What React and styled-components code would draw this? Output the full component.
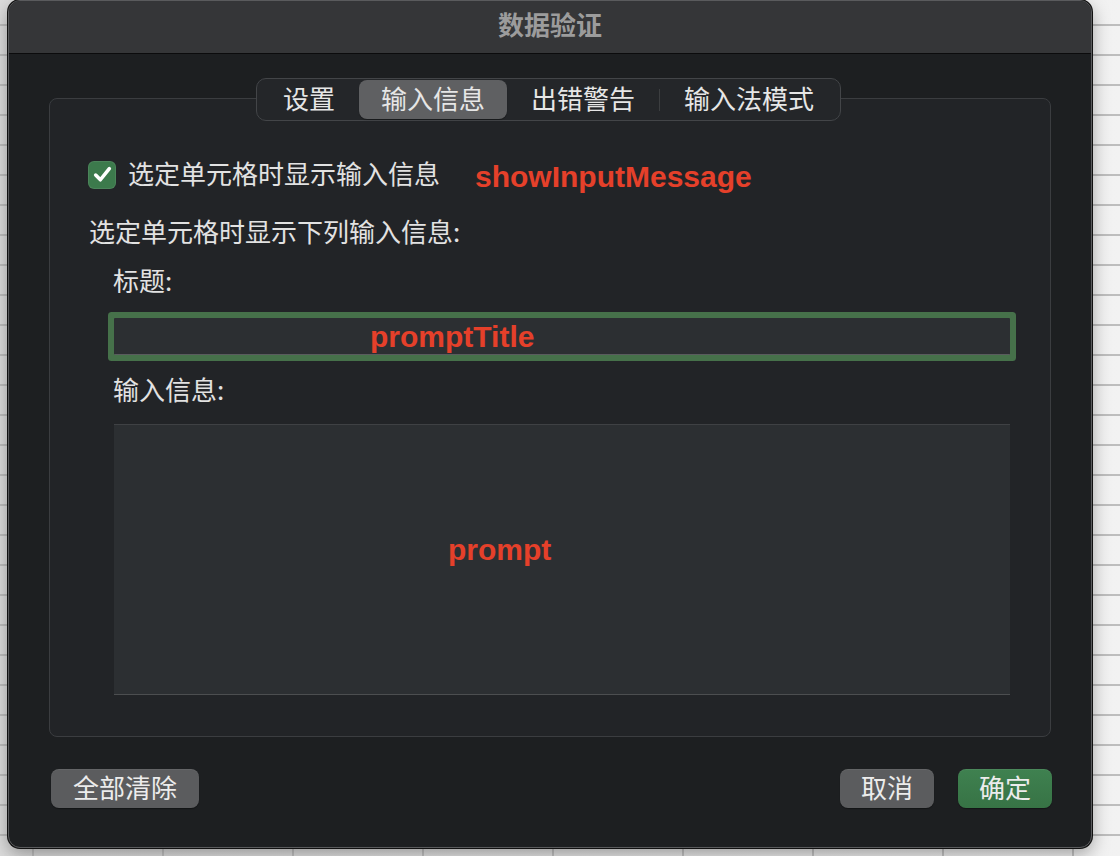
import React, { useState } from 'react';
import styled, { createGlobalStyle } from 'styled-components';

const GlobalStyle = createGlobalStyle`
  html, body {
    margin: 0;
    padding: 0;
  }
  body {
    width: 1120px;
    height: 856px;
    overflow: hidden;
    font-family: "Noto Sans CJK SC", "Noto Sans", sans-serif;
    background-color: #e9e9e9;
    background-image:
      repeating-linear-gradient(to bottom, transparent 0, transparent 24px, #bdbdbd 24px, #bdbdbd 26px, transparent 26px, transparent 30px),
      repeating-linear-gradient(to right, transparent 0, transparent 32px, #c4c4c4 32px, #c4c4c4 34px, transparent 34px, transparent 130px),
      linear-gradient(to right, #dcdcdc, #f2f2f2);
  }
`;

const CJK = '"Noto Sans CJK SC", "Noto Sans", sans-serif';
const LATIN = '"Liberation Sans", Arial, sans-serif';

const s = {
  Page: styled.div`
    padding-left: 8px;
    height: 856px;
  `,
  Dialog: styled.div`
    width: 1084px;
    height: 848px;
    box-sizing: border-box;
    display: flex;
    flex-direction: column;
    background: #1d1f21;
    border: 1px solid #5a5b5d;
    border-radius: 12px;
    overflow: hidden;
    box-shadow: 0 0 0 1px #111, 0 6px 18px rgba(0, 0, 0, 0.35);
  `,
  TitleBar: styled.div`
    height: 53px;
    box-sizing: border-box;
    padding-bottom: 6px;
    flex-shrink: 0;
    display: flex;
    align-items: center;
    justify-content: center;
    background: #353638;
    border-bottom: 1px solid #0b0b0c;
    color: #9c9c9c;
    font-family: ${CJK};
    font-weight: 700;
    font-size: 26px;
    line-height: 1;
  `,
  Body: styled.div`
    flex: 1;
    display: flex;
    flex-direction: column;
    padding: 24px 39px 0 40px;
  `,
  TabRow: styled.div`
    display: flex;
    justify-content: center;
    position: relative;
    z-index: 1;
    margin-bottom: -23px;
    padding-right: 4px;
  `,
  Tabs: styled.div`
    display: flex;
    align-items: center;
    height: 43px;
    box-sizing: border-box;
    padding: 0 2px;
    background: #242629;
    border: 1px solid #434548;
    border-radius: 10px;
  `,
  Tab: styled.div`
    height: 39px;
    box-sizing: border-box;
    display: flex;
    align-items: center;
    padding: 0 ${(p) => p.$pad}px 4px;
    border-radius: 8px;
    background: ${(p) => (p.$active ? '#5f6062' : 'transparent')};
    box-shadow: ${(p) => (p.$active ? '0 1px 1px rgba(0,0,0,0.35)' : 'none')};
    color: #e6e6e6;
    font-family: ${CJK};
    font-size: 26px;
    line-height: 1;
    cursor: default;
  `,
  TabDivider: styled.div`
    width: 1px;
    height: 22px;
    background: #3c3e40;
  `,
  Panel: styled.div`
    width: 1002px;
    height: 639px;
    box-sizing: border-box;
    padding: 58px 0 0 38px;
    display: flex;
    flex-direction: column;
    background: #222427;
    border: 1px solid #3b3d40;
    border-radius: 8px;
  `,
  CheckRow: styled.label`
    display: flex;
    align-items: center;
    height: 36px;
  `,
  Check: styled.span`
    width: 28px;
    height: 28px;
    border-radius: 6px;
    background: #3c7a4c;
    display: flex;
    align-items: center;
    justify-content: center;
    margin-right: 12px;
    margin-top: -1px;
    box-shadow: inset 0 0 0 1px rgba(255, 255, 255, 0.08);
  `,
  Label: styled.div`
    color: #e2e2e2;
    font-family: ${CJK};
    font-size: 26px;
    line-height: 32px;
    height: 36px;
    margin-top: ${(p) => p.$top || 0}px;
    margin-left: ${(p) => p.$indent || 0}px;
  `,
  Note: styled.span`
    color: #e5402a;
    font-family: ${LATIN};
    font-weight: 700;
    font-size: 30px;
    line-height: 1;
    margin-left: ${(p) => p.$left || 0}px;
    margin-top: ${(p) => p.$top || 0}px;
  `,
  TitleField: styled.div`
    width: 896px;
    height: 37px;
    box-sizing: border-box;
    margin: 18px 0 0 26px;
    display: flex;
    align-items: center;
    padding-left: 256px;
    padding-top: 2px;
    background: #2c2f32;
    border-bottom: 1px solid #5a5c5e;
    box-shadow: 0 0 0 6px #46714a;
    border-radius: 1px;
  `,
  MessageField: styled.div`
    width: 896px;
    height: 271px;
    box-sizing: border-box;
    margin: 15px 0 0 26px;
    display: flex;
    align-items: center;
    padding: 0 0 20px 334px;
    background: #2c2f32;
    border-top: 1px solid #3f4144;
    border-bottom: 1px solid #4c4e50;
  `,
  Footer: styled.div`
    display: flex;
    align-items: center;
    margin-top: 32px;
    padding-left: 2px;
    gap: 24px;
  `,
  Spacer: styled.div`
    flex: 1;
  `,
  Button: styled.button`
    height: 39px;
    width: ${(p) => p.$width}px;
    border: none;
    border-radius: 8px;
    padding: 0 0 4px;
    background: ${(p) => (p.$primary ? 'linear-gradient(#3f8150, #377345)' : '#5b5c5e')};
    box-shadow: 0 1px 1px rgba(0, 0, 0, 0.35), inset 0 1px 0 rgba(255, 255, 255, 0.06);
    color: #ececec;
    font-family: ${CJK};
    font-size: 26px;
    line-height: 1;
    cursor: default;
  `,
};

const tabs = [
  { name: '设置', pad: 24 },
  { name: '输入信息', pad: 22 },
  { name: '出错警告', pad: 24 },
  { name: '输入法模式', pad: 24 },
];

const CheckMark = () => (
  <svg width="21" height="21" viewBox="0 0 20 20" fill="none">
    <path d="M3.5 10.5 L8 15 L16.5 4.5" stroke="#ffffff" strokeWidth="3.4" strokeLinecap="round" strokeLinejoin="round" />
  </svg>
);

const App = () => {
  const [active, setActive] = useState(1);

  return (
    <>
      <GlobalStyle />
      <s.Page>
        <s.Dialog>
          <s.TitleBar>数据验证</s.TitleBar>
          <s.Body>
            <s.TabRow>
              <s.Tabs>
                {tabs.map((t, i) => (
                  <React.Fragment key={t.name}>
                    {i === 3 && <s.TabDivider />}
                    <s.Tab $active={i === active} $pad={t.pad} onClick={() => setActive(i)}>
                      {t.name}
                    </s.Tab>
                  </React.Fragment>
                ))}
              </s.Tabs>
            </s.TabRow>
            <s.Panel>
              <s.CheckRow>
                <s.Check>
                  <CheckMark />
                </s.Check>
                <s.Label>选定单元格时显示输入信息</s.Label>
                <s.Note $left={35} $top={4}>showInputMessage</s.Note>
              </s.CheckRow>
              <s.Label $top={22} $indent={1}>选定单元格时显示下列输入信息:</s.Label>
              <s.Label $top={13} $indent={25}>标题:</s.Label>
              <s.TitleField>
                <s.Note>promptTitle</s.Note>
              </s.TitleField>
              <s.Label $top={18} $indent={25}>输入信息:</s.Label>
              <s.MessageField>
                <s.Note>prompt</s.Note>
              </s.MessageField>
            </s.Panel>
            <s.Footer>
              <s.Button $width={148}>全部清除</s.Button>
              <s.Spacer />
              <s.Button $width={94}>取消</s.Button>
              <s.Button $width={94} $primary>确定</s.Button>
            </s.Footer>
          </s.Body>
        </s.Dialog>
      </s.Page>
    </>
  );
};

export default App;
